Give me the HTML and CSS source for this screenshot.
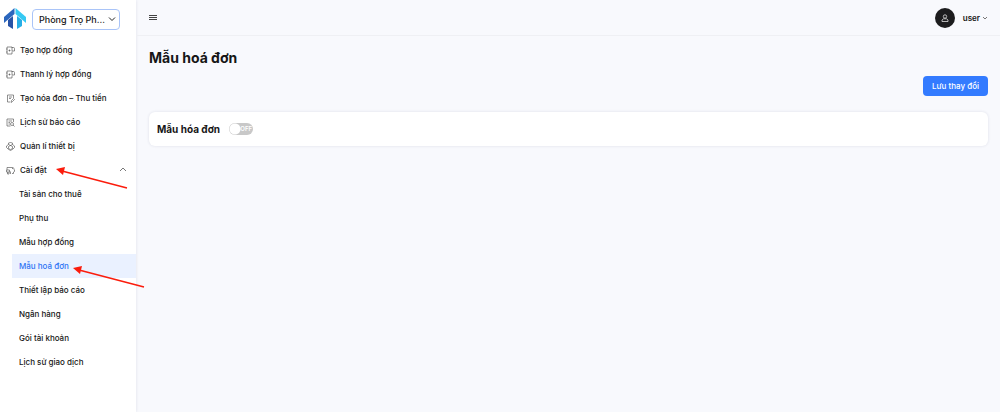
FILE: index.html
```
<!DOCTYPE html>
<html lang="vi">
<head>
    <meta charset="UTF-8">
    <meta name="viewport" content="width=device-width, initial-scale=1.0">
    <title>Mẫu hoá đơn</title>
    <link rel="stylesheet" href="styles.css">
</head>
<body>

    <!-- Sidebar -->
    <aside class="sidebar">
        <div class="brand">
            <svg class="logo" viewBox="0 0 22 22" aria-hidden="true">
                <path d="M0 9L10.5 0V6L0 15Z" fill="#2b66bd"/>
                <path d="M22 9L11.5 0V6L22 15Z" fill="#35c9f3"/>
                <path d="M4 12L9 8V21L4 18Z" fill="#2853a6"/>
                <path d="M18 12L13 8V21L18 18Z" fill="#27aee6"/>
            </svg>
            <select class="house-select" aria-label="Nhà trọ">
                <option>Phòng Trọ Ph...</option>
            </select>
        </div>

        <nav>
            <ul class="menu">
                <li><a class="menu-item" href="#">
                    <svg class="icon" viewBox="0 0 18 18"><path d="M12 4V2H2V16H12V11M0 6H3M0 12H3M5 9H9M7 7V11M12 3H15Q17 3 17 5V10H12Z"/></svg>
                    Tạo hợp đồng</a></li>
                <li><a class="menu-item" href="#">
                    <svg class="icon" viewBox="0 0 18 18"><path d="M12 4V2H2V16H12V11M0 6H3M0 12H3M5 9H9M7 7V11M12 3H15Q17 3 17 5V10H12Z"/></svg>
                    Thanh lý hợp đồng</a></li>
                <li><a class="menu-item" href="#">
                    <svg class="icon" viewBox="0 0 18 18"><path d="M15 8V2H3V16H8M6 6H12M6 9H10M10 17L11 13L15 9L17 11L13 15Z"/></svg>
                    Tạo hóa đơn – Thu tiền</a></li>
                <li><a class="menu-item" href="#">
                    <svg class="icon" viewBox="0 0 18 18"><path d="M15 8V2H2V16H9M5 6H12M5 9H8M5 12H8M14 14L17 17"/><circle cx="12" cy="12" r="3"/></svg>
                    Lịch sử báo cáo</a></li>
                <li><a class="menu-item" href="#">
                    <svg class="icon" viewBox="0 0 18 18"><path d="M5 5V2L9 1L13 2V5L17 8V11L14 14L9 17L4 14L1 11V8ZM5 5L13 9V13M13 5L5 9V13L9 15L13 13"/></svg>
                    Quản lí thiết bị</a></li>
                <li>
                    <button class="menu-item" type="button" aria-expanded="true" onclick="toggleSettings(this)">
                        <svg class="icon" viewBox="0 0 18 18"><path d="M2 8V3H13V6M1 8H7V12H1ZM3 12V16H6V12M13 4C16 3 17 6 16 8L18 10L15 12V15H12M9 11V16"/></svg>
                        Cài đặt
                        <svg class="caret" viewBox="0 0 10 10"><path d="M2 6L5 3L8 6"/></svg>
                    </button>
                    <ul class="submenu" id="settingsMenu">
                        <li><a href="#">Tài sản cho thuê</a></li>
                        <li><a href="#">Phụ thu</a></li>
                        <li><a href="#">Mẫu hợp đồng</a></li>
                        <li><a class="active" href="#">Mẫu hoá đơn</a></li>
                        <li><a href="#">Thiết lập báo cáo</a></li>
                        <li><a href="#">Ngân hàng</a></li>
                        <li><a href="#">Gói tài khoản</a></li>
                        <li><a href="#">Lịch sử giao dịch</a></li>
                    </ul>
                </li>
            </ul>
        </nav>
    </aside>

    <!-- Content -->
    <div class="page">
        <header class="topbar">
            <button class="icon-button" type="button" aria-label="Menu">
                <svg class="burger" viewBox="0 0 8 8"><path d="M0 1.5H8M0 3.5H8M0 5.5H8"/></svg>
            </button>
            <button class="user" type="button">
                <span class="avatar">
                    <svg viewBox="0 0 10 10"><circle cx="5" cy="3.5" r="1.7"/><path d="M3.5 5.8H6.5L8 7V8.5H2V7Z"/></svg>
                </span>
                user
                <svg class="caret" viewBox="0 0 10 10"><path d="M3 4L5 6L7 4"/></svg>
            </button>
        </header>

        <main>
            <h1>Mẫu hoá đơn</h1>
            <div class="actions">
                <button class="save-button" type="button">Lưu thay đổi</button>
            </div>
            <section class="card">
                <label class="card-title" for="invoiceToggle">Mẫu hóa đơn</label>
                <span class="switch">
                    <input type="checkbox" id="invoiceToggle">
                    <span class="switch-text">OFF</span>
                </span>
            </section>
        </main>
    </div>

    <!-- Guide arrows over the menu -->
    <svg class="arrows" width="160" height="300" aria-hidden="true">
        <path class="shaft" d="M127 188L62 171M144 287L79 270"/>
        <path class="head" d="M56 169L65 167L63 175ZM73 268L82 266L80 274Z"/>
    </svg>

    <script>
        // Open or close the settings submenu
        function toggleSettings(button) {
            const menu = document.getElementById('settingsMenu');
            menu.hidden = !menu.hidden;
            button.setAttribute('aria-expanded', !menu.hidden);
        }
    </script>

</body>
</html>
```
FILE: styles.css
```
* {
    box-sizing: border-box;
    margin: 0;
    padding: 0;
}

body {
    display: flex;
    position: relative;
    min-height: 100vh;
    font-family: Inter, "Noto Sans", sans-serif;
    font-size: 8px;
    font-weight: 500;
    color: #161616;
    background-color: #f8f9fd;
}

button, select {
    font: inherit;
    color: inherit;
    border: none;
    background: none;
    cursor: pointer;
}

a {
    color: inherit;
    text-decoration: none;
}

ul {
    list-style: none;
}

svg {
    flex: none;
    fill: none;
    stroke-linejoin: round;
}

.sidebar {
    flex: none;
    width: 136px;
    background-color: #fff;
    box-shadow: 0 0 3px rgba(30, 40, 80, 0.12);
}

.brand {
    display: flex;
    align-items: center;
    gap: 6px;
    height: 38px;
    padding: 0 16px 0 4px;
}

.logo {
    width: 22px;
    height: 22px;
}

.house-select {
    flex: 1;
    min-width: 0;
    height: 21px;
    padding: 0 12px 0 6px;
    font-size: 9px;
    border: 1px solid #a9c4f8;
    border-radius: 4px;
    appearance: none;
    background: url("data:image/svg+xml,%3Csvg xmlns='http://www.w3.org/2000/svg' viewBox='0 0 8 8'%3E%3Cpath d='M1 2.5L4 5.5L7 2.5' fill='none' stroke='%23222'/%3E%3C/svg%3E") no-repeat right 3px center / 8px 8px;
}

.menu-item {
    display: flex;
    align-items: center;
    gap: 5px;
    width: 100%;
    height: 24px;
    padding: 0 8px 0 6px;
    text-align: left;
}

.icon {
    width: 9px;
    height: 9px;
    stroke: #555;
    stroke-width: 1.3;
}

.caret {
    width: 10px;
    height: 10px;
    margin-left: auto;
    stroke: #777;
}

.submenu {
    padding-left: 12px;
}

.submenu a {
    display: block;
    padding-left: 7px;
    line-height: 24px;
}

.submenu .active {
    color: #2f74f5;
    background-color: #eaf1ff;
}

.page {
    flex: 1;
    min-width: 0;
}

.topbar {
    display: flex;
    align-items: center;
    justify-content: space-between;
    height: 36px;
    padding: 0 10px 0 13px;
    border-bottom: 1px solid #eff0f4;
}

.icon-button {
    display: flex;
}

.burger {
    width: 8px;
    height: 8px;
    stroke: #444;
    shape-rendering: crispEdges;
}

.user {
    display: flex;
    align-items: center;
    font-weight: 600;
}

.avatar {
    display: flex;
    align-items: center;
    justify-content: center;
    width: 20px;
    height: 20px;
    margin-right: 8px;
    border-radius: 50%;
    background-color: #1c1c1e;
}

.avatar svg {
    width: 10px;
    height: 10px;
    stroke: #ddd;
    stroke-width: 0.8;
}

main {
    padding: 12px 12px 12px 13px;
}

h1 {
    font-size: 14px;
    font-weight: 700;
    line-height: 20px;
}

.actions {
    display: flex;
    justify-content: flex-end;
    margin: 8px 0 16px;
}

.save-button {
    height: 20px;
    padding: 0 9px;
    color: #fff;
    border-radius: 4px;
    background-color: #337bff;
}

.card {
    display: flex;
    align-items: center;
    gap: 9px;
    height: 34px;
    padding: 0 8px;
    border-radius: 6px;
    background-color: #fff;
    box-shadow: 0 0 3px rgba(30, 40, 80, 0.12);
}

.card-title {
    font-size: 10px;
    font-weight: 700;
}

.switch {
    position: relative;
    display: flex;
    width: 24px;
    height: 12px;
}

.switch input {
    width: 100%;
    appearance: none;
    border-radius: 6px;
    background: radial-gradient(circle at 6px 6px, #fff 5px, transparent 6px) #c8c8c8;
    cursor: pointer;
}

.switch input:checked {
    background-color: #337bff;
}

.switch-text {
    position: absolute;
    right: 1px;
    font-size: 6px;
    font-weight: 600;
    line-height: 12px;
    color: #fff;
    pointer-events: none;
}

.arrows {
    position: absolute;
    top: 0;
    left: 0;
    pointer-events: none;
}

.shaft {
    stroke: #fb1c0c;
    stroke-width: 1.5;
}

.head {
    fill: #fb1c0c;
}
```
